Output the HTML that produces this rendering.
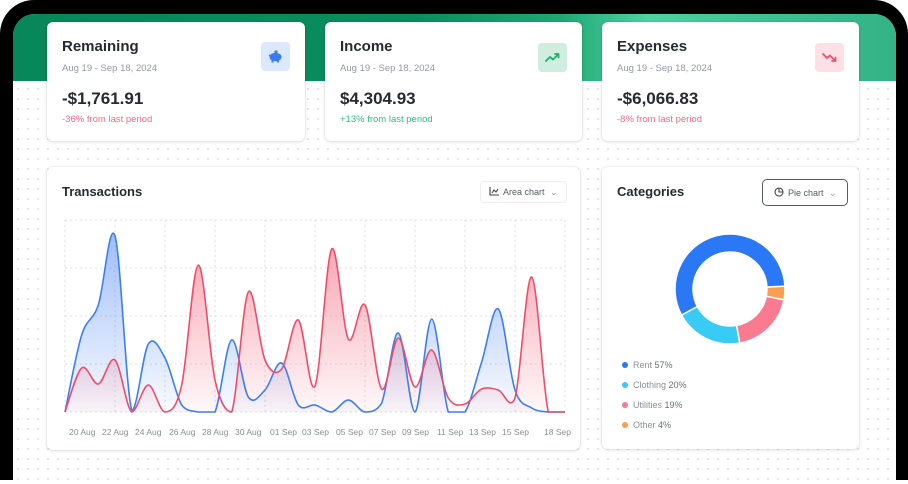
<!DOCTYPE html>
<html><head><meta charset="utf-8">
<style>
*{box-sizing:border-box;margin:0;padding:0}
body{width:908px;height:461px;overflow:hidden;background:#fff;font-family:"Liberation Sans",sans-serif;position:relative}
.bezel{position:absolute;left:0;top:0;width:908px;height:480px;background:#000;border-radius:34px 34px 0 0}
.screen{position:absolute;left:13px;top:14px;width:883px;height:470px;background-color:#fff;background-image:radial-gradient(#d9dde3 0.8px,transparent 1px);background-size:10px 10px;border-radius:22px 22px 0 0;overflow:hidden}
.hdr{position:absolute;left:0;top:0;width:100%;height:67px;background:linear-gradient(90deg,#07875a 0%,#0a8d5e 45%,#1fa774 62%,#4fd3a3 72%,#3ec193 85%,#34b385 100%)}
.card{position:absolute;background:#fff;border-radius:6px;box-shadow:0 1px 4px rgba(0,0,0,.12),0 0 0 1px rgba(0,0,0,.03)}
.t{position:absolute;font-size:15px;font-weight:bold;color:#262a33}
.d{position:absolute;font-size:9.5px;color:#9399a6}
.v{position:absolute;font-size:17px;font-weight:bold;color:#262a33}
.p{position:absolute;font-size:9.5px}
.ic{position:absolute;width:29px;height:29px;border-radius:4px}
.lbl{position:absolute;font-size:8.5px;color:#8a8f99;top:260px}
.leg{position:absolute;left:20px;font-size:9px;color:#8a909c}
.leg span{display:inline-block;width:6px;height:6px;border-radius:50%;margin-right:5px;vertical-align:0}
</style></head><body>
<div class="bezel"></div>
<div class="screen">
<div class="hdr"></div>
</div>

<div class="card" style="left:47px;top:22px;width:258px;height:119px">
 <div class="t" style="left:15px;top:16px">Remaining</div>
 <div class="d" style="left:15px;top:41px">Aug 19 - Sep 18, 2024</div>
 <div class="v" style="left:15px;top:67px">-$1,761.91</div>
 <div class="p" style="left:15px;top:92px;color:#f06b84">-36% from last period</div>
 <div class="ic" style="left:214px;top:20px;background:#dce8fd">
  <svg width="29" height="29" viewBox="0 0 29 29"><ellipse cx="14.5" cy="15" rx="6" ry="4.3" fill="#3b7cf1"/><circle cx="15" cy="10" r="1.6" fill="#3b7cf1"/><rect x="10.5" y="17" width="2" height="3.5" fill="#3b7cf1"/><rect x="16" y="17" width="2" height="3.5" fill="#3b7cf1"/><path d="M8 13l1.5 1" stroke="#3b7cf1" stroke-width="1.5"/></svg>
 </div>
</div>
<div class="card" style="left:325px;top:22px;width:257px;height:119px">
 <div class="t" style="left:15px;top:16px">Income</div>
 <div class="d" style="left:15px;top:41px">Aug 19 - Sep 18, 2024</div>
 <div class="v" style="left:15px;top:67px">$4,304.93</div>
 <div class="p" style="left:15px;top:92px;color:#2fbf7c">+13% from last period</div>
 <div class="ic" style="left:213px;top:21px;background:#cfeee0">
  <svg width="29" height="29" viewBox="0 0 29 29"><path d="M8 18l4-4 3 2.5 5.5-5.5M17 11h3.5v3.5" stroke="#1fae6d" stroke-width="1.8" fill="none" stroke-linecap="round" stroke-linejoin="round"/></svg>
 </div>
</div>
<div class="card" style="left:602px;top:22px;width:257px;height:119px">
 <div class="t" style="left:15px;top:16px">Expenses</div>
 <div class="d" style="left:15px;top:41px">Aug 19 - Sep 18, 2024</div>
 <div class="v" style="left:15px;top:67px">-$6,066.83</div>
 <div class="p" style="left:15px;top:92px;color:#f06b84">-8% from last period</div>
 <div class="ic" style="left:213px;top:21px;background:#fde0e5">
  <svg width="29" height="29" viewBox="0 0 29 29"><path d="M8 11l4 4 3-2.5 5.5 5.5M17 18h3.5v-3.5" stroke="#f04f6a" stroke-width="1.8" fill="none" stroke-linecap="round" stroke-linejoin="round"/></svg>
 </div>
</div>

<div class="card" style="left:47px;top:167px;width:533px;height:283px">
 <div class="t" style="left:15px;top:17px;font-size:13px">Transactions</div>
 <div style="position:absolute;left:433px;top:14px;width:87px;height:22px;border:1px solid #eceef1;border-radius:4px;font-size:9px;color:#555b66;padding:5px 0 0 8px">
  <svg width="10" height="9" viewBox="0 0 10 9" style="vertical-align:-1px;margin-right:4px"><path d="M1 0v8h9M3 6l2-3 2 2 2-3" stroke="#444" stroke-width="1.1" fill="none"/></svg>Area chart <span style="color:#999;margin-left:3px">⌄</span>
 </div>
 <svg id="ch" style="position:absolute;left:0;top:0" width="533" height="283"></svg>
 <div class="lbl" style="left:22px">20 Aug</div><div class="lbl" style="left:55px">22 Aug</div>
 <div class="lbl" style="left:88px">24 Aug</div><div class="lbl" style="left:122px">26 Aug</div>
 <div class="lbl" style="left:155px">28 Aug</div><div class="lbl" style="left:188px">30 Aug</div>
 <div class="lbl" style="left:223px">01 Sep</div><div class="lbl" style="left:255px">03 Sep</div>
 <div class="lbl" style="left:289px">05 Sep</div><div class="lbl" style="left:322px">07 Sep</div>
 <div class="lbl" style="left:355px">09 Sep</div><div class="lbl" style="left:390px">11 Sep</div>
 <div class="lbl" style="left:422px">13 Sep</div><div class="lbl" style="left:455px">15 Sep</div>
 <div class="lbl" style="left:497px">18 Sep</div>
</div>

<div class="card" style="left:602px;top:167px;width:257px;height:282px">
 <div class="t" style="left:15px;top:17px;font-size:13px">Categories</div>
 <div style="position:absolute;left:160px;top:12px;width:86px;height:27px;border:1.5px solid #555a63;border-radius:5px;font-size:9px;color:#555b66;padding:7px 0 0 11px">
  <svg width="10" height="10" viewBox="0 0 10 10" style="vertical-align:-1px;margin-right:4px"><circle cx="5" cy="5" r="4" stroke="#444" fill="none" stroke-width="1.1"/><path d="M5 1v4h4" stroke="#444" fill="none" stroke-width="1.1"/></svg>Pie chart <span style="color:#999;margin-left:3px">⌄</span>
 </div>
 <svg id="pie" style="position:absolute;left:0;top:0" width="257" height="282"></svg>
 <div class="leg" style="top:193px"><span style="background:#2a78f5"></span>Rent <b style="font-weight:normal;color:#6a707c">57%</b></div>
 <div class="leg" style="top:213px"><span style="background:#38ccf5"></span>Clothing <b style="font-weight:normal;color:#6a707c">20%</b></div>
 <div class="leg" style="top:233px"><span style="background:#fa7a8f"></span>Utilities <b style="font-weight:normal;color:#6a707c">19%</b></div>
 <div class="leg" style="top:253px"><span style="background:#fa9f50"></span>Other <b style="font-weight:normal;color:#6a707c">4%</b></div>
</div>

<script>
(function(){
var ns="http://www.w3.org/2000/svg",s=document.getElementById('ch');
var ox=47,oy=167;
var h='<defs><linearGradient id="gb" x1="0" y1="0" x2="0" y2="1"><stop offset="0" stop-color="#2a6ff0" stop-opacity=".45"/><stop offset="1" stop-color="#2a6ff0" stop-opacity=".03"/></linearGradient><linearGradient id="gr" x1="0" y1="0" x2="0" y2="1"><stop offset="0" stop-color="#f0506a" stop-opacity=".5"/><stop offset="1" stop-color="#f0506a" stop-opacity=".04"/></linearGradient></defs>';
for(var i=0;i<=10;i++){var x=65+50*i-ox;h+='<line x1="'+x+'" y1="'+(220-oy)+'" x2="'+x+'" y2="'+(412-oy)+'" stroke="#dcdfe4" stroke-dasharray="2 3"/>';}
for(var j=0;j<=4;j++){var y=220+48*j-oy;h+='<line x1="'+(65-ox)+'" y1="'+y+'" x2="'+(565-ox)+'" y2="'+y+'" stroke="#dcdfe4" stroke-dasharray="2 3"/>';}
var B=[412,335,305,236,410,344,358,405,412,412,340,397,390,363,405,405,412,400,412,403,333,412,319,412,412,362,309,390,408,412,412];
var R=[412,368,384,360,412,385,412,385,265,380,412,292,360,369,320,386,249,339,305,389,338,387,350,398,404,389,390,398,277,412,412];
function path(a){var p=a.map(function(v,i){return[65+500*i/30-ox,v-oy]});var d='M'+p[0][0]+','+p[0][1];
for(var i=0;i<p.length-1;i++){var p0=p[i-1]||p[i],p1=p[i],p2=p[i+1],p3=p[i+2]||p2;var t=0.5/3*2;
var c1x=p1[0]+(p2[0]-p0[0])/6,c1y=p1[1]+(p2[1]-p0[1])/6,c2x=p2[0]-(p3[0]-p1[0])/6,c2y=p2[1]-(p3[1]-p1[1])/6;
c1y=Math.min(c1y,412-oy);c2y=Math.min(c2y,412-oy);
d+=' C'+c1x.toFixed(1)+','+c1y.toFixed(1)+' '+c2x.toFixed(1)+','+c2y.toFixed(1)+' '+p2[0].toFixed(1)+','+p2[1];}return d;}
var pb=path(B),pr=path(R),base=' L'+(565-ox)+','+(412-oy)+' L'+(65-ox)+','+(412-oy)+' Z';
h+='<path d="'+pb+base+'" fill="url(#gb)"/><path d="'+pr+base+'" fill="url(#gr)"/>';
h+='<path d="'+pb+'" fill="none" stroke="#3d7ff2" stroke-width="1.6"/><path d="'+pr+'" fill="none" stroke="#ee4d6a" stroke-width="1.6"/>';
s.innerHTML=h;
var q=document.getElementById('pie'),cx=128,cy=122,ro=55,ri=37,segs=[[4,'#fa9f50'],[19,'#fa7a8f'],[20,'#38ccf5'],[57,'#2a78f5']];
var a=-3*Math.PI/180,g='';
segs.forEach(function(sg){var b=a+sg[0]/100*2*Math.PI;var L=(b-a)>Math.PI?1:0;
function pt(r,t){return(cx+r*Math.cos(t)).toFixed(2)+','+(cy+r*Math.sin(t)).toFixed(2)}
g+='<path d="M'+pt(ro,a)+' A'+ro+','+ro+' 0 '+L+' 1 '+pt(ro,b)+' L'+pt(ri,b)+' A'+ri+','+ri+' 0 '+L+' 0 '+pt(ri,a)+' Z" fill="'+sg[1]+'" stroke="#fff" stroke-width="1.5"/>';a=b;});
q.innerHTML=g;
})();
</script>
</body></html>
